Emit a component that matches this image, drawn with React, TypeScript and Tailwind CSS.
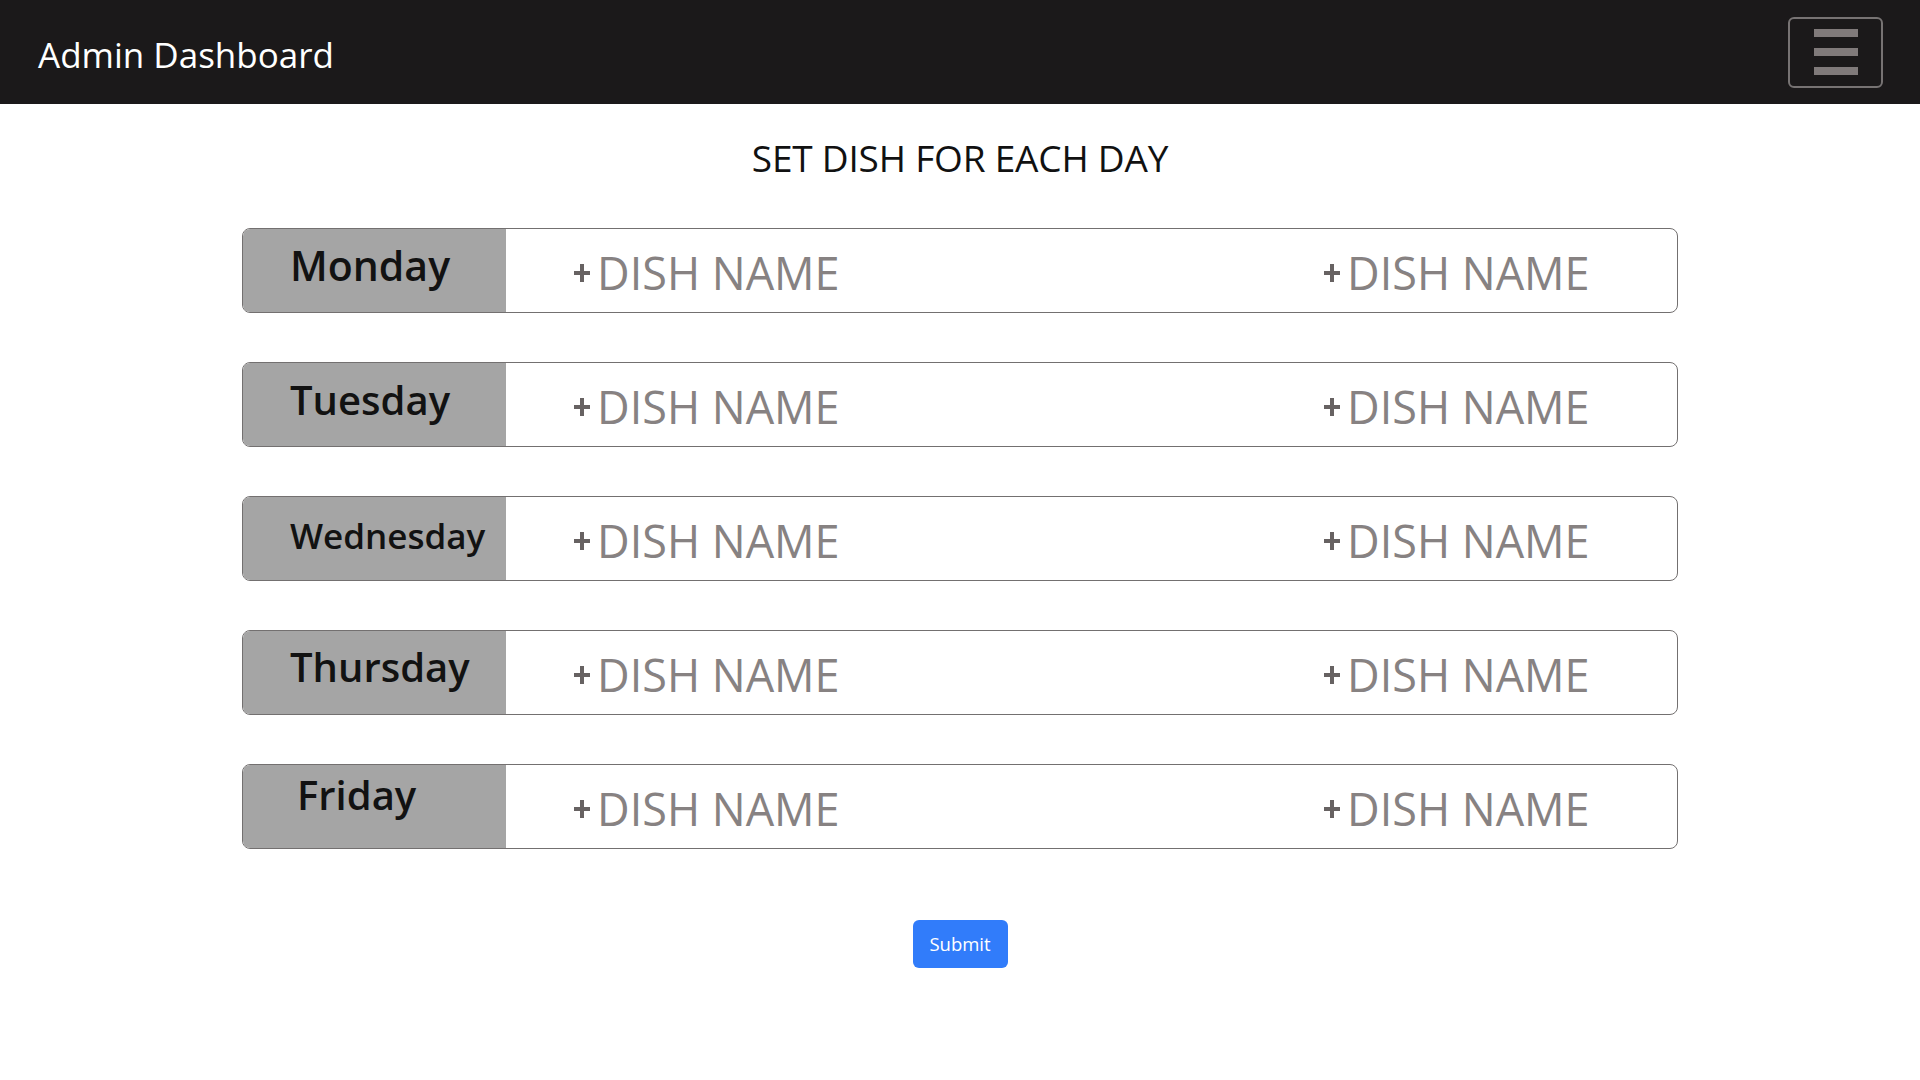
import React from "react";

type Day = {
  name: string;
  text: string;
};

// per-row label sizing follows the screenshot (Wednesday is set smaller)
const days: Day[] = [
  { name: "Monday", text: "text-[41px] pt-[16px] pl-[47px]" },
  { name: "Tuesday", text: "text-[40px] pt-[17px] pl-[47px]" },
  { name: "Wednesday", text: "text-[35px] pt-[21px] pl-[47px]" },
  { name: "Thursday", text: "text-[40px] pt-[16px] pl-[47px]" },
  { name: "Friday", text: "text-[40px] pt-[10px] pl-[54px]" },
];

const Plus = () => (
  <svg width="18" height="20" viewBox="0 0 18 20" className="shrink-0">
    <path d="M9 1v18M1 10h16" stroke="#676262" strokeWidth="4" />
  </svg>
);

const Dish = ({ className = "" }: { className?: string }) => (
  <div className={"flex items-center gap-[6px] " + className}>
    <Plus />
    <span className="text-[45px] leading-none text-[#878282]">DISH NAME</span>
  </div>
);

export default function App() {
  return (
    <div className="min-h-screen bg-white font-['Open_Sans',sans-serif]">
      {/* Top bar */}
      <nav className="h-[104px] bg-[#1b191a] flex items-center justify-between pl-[38px] pr-[37px]">
        <span className="text-[35px] leading-none text-white mt-[4px]">Admin Dashboard</span>
        <button className="w-[95px] h-[71px] rounded-[6px] border-2 border-[#777373] flex flex-col items-center justify-center gap-[11px]">
          <span className="block w-[44px] h-[8px] bg-[#807a7a]" />
          <span className="block w-[44px] h-[8px] bg-[#807a7a]" />
          <span className="block w-[44px] h-[8px] bg-[#807a7a]" />
        </button>
      </nav>

      <main className="flex flex-col items-center">
        <h1 className="mt-[35px] text-[37px] leading-none text-[#111] tracking-[-0.2px]">
          SET DISH FOR EACH DAY
        </h1>

        <div className="mt-[52px] w-[1436px] flex flex-col gap-[49px]">
          {days.map((d) => (
            <div
              key={d.name}
              className="h-[85px] flex rounded-[8px] border border-[#737070] overflow-hidden"
            >
              <div className={"w-[263px] shrink-0 bg-[#a5a5a5] leading-none font-semibold text-[#121212] " + d.text}>
                {d.name}
              </div>
              <div className="flex-1 flex items-start pt-[21px]">
                <Dish className="ml-[67px] w-[750px]" />
                <Dish />
              </div>
            </div>
          ))}
        </div>

        <button className="mt-[71px] w-[95px] h-[48px] rounded-[6px] bg-[#317cfa] text-white text-[18.5px] leading-none">
          Submit
        </button>
      </main>
    </div>
  );
}
